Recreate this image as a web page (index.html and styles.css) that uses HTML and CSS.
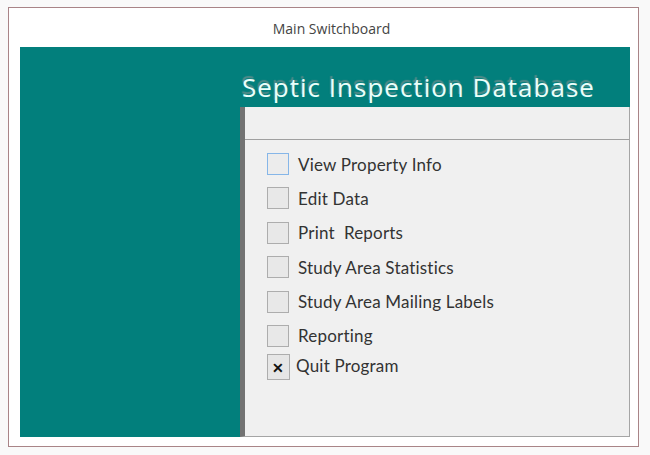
FILE: index.html
```html
<!DOCTYPE html>
<html lang="en">
<head>
  <meta charset="UTF-8" />
  <title>Main Switchboard</title>
  <link rel="stylesheet" href="styles.css">
</head>
<body>
  <div class="frame">
    <div class="caption">Main Switchboard</div>
    <div class="board">
      <div class="side"></div>
      <div class="main">
        <h1 class="heading">Septic Inspection Database</h1>
        <div class="panel">
          <div class="panel-head"></div>
          <ul class="menu">
            <li class="item"><span class="box focus"></span><span class="label">View Property Info</span></li>
            <li class="item"><span class="box"></span><span class="label">Edit Data</span></li>
            <li class="item"><span class="box"></span><span class="label">Print&nbsp; Reports</span></li>
            <li class="item"><span class="box"></span><span class="label">Study Area Statistics</span></li>
            <li class="item"><span class="box"></span><span class="label">Study Area Mailing Labels</span></li>
            <li class="item"><span class="box"></span><span class="label">Reporting</span></li>
            <li class="item quit"><span class="box">&#x2715;</span><span class="label">Quit Program</span></li>
          </ul>
        </div>
      </div>
    </div>
  </div>
</body>
</html>
```

FILE: styles.css
```css
body { margin: 0; background-color: #f9f9f9; font-family: "Open Sans", sans-serif; }
.frame {
  margin: 7px 0 0 8px; width: 629px; height: 438px;
  border: 1px solid #a98487; background-color: #fff;
  display: flex; flex-direction: column;
}
.caption { height: 39px; line-height: 42px; padding-left: 16px; text-align: center; font-size: 14px; color: #444; }
.board { display: flex; margin: 0 8px 9px 11px; flex: 1; background-color: #027f7c; }
.side { width: 220px; }
.main { flex: 1; display: flex; flex-direction: column; }
.heading {
  margin: 0; height: 60px; padding-left: 2px; box-sizing: border-box;
  font-size: 26px; font-weight: normal; line-height: 80px; letter-spacing: 1px; color: #eafffb;
  text-shadow: -1px -3px 1px rgba(150, 150, 150, 0.55);
  white-space: nowrap;
}
.panel {
  flex: 1; background-color: #f0f0f0;
  border-left: 5px solid #737373; border-right: 1px solid #a5a5a5; border-bottom: 1px solid #a5a5a5;
}
.panel-head { height: 32px; border-bottom: 1px solid #a0a0a0; }
.menu { list-style: none; margin: 0; padding: 13px 0 0 22px; }
.item {
  display: flex; align-items: center; height: 22px; margin-bottom: 12.4px;
  font-family: Lato, sans-serif; font-size: 17px; letter-spacing: 0.2px; color: #333;
}
.box {
  width: 20px; height: 20px; border: 1px solid #adadad; background-color: #e8e8e8;
  margin-right: 9px; flex: none;
}
.box.focus { border-color: #86b6e8; background-color: #ececec; }
.quit { height: 26px; margin-top: -5px; }
.quit .box {
  width: 21px; height: 24px; margin-right: 6px; background-color: #e6e6e6;
  display: flex; align-items: center; justify-content: center;
  font-size: 14px; font-weight: bold; color: #111;
}
.quit .label { margin-top: -3px; }
```
